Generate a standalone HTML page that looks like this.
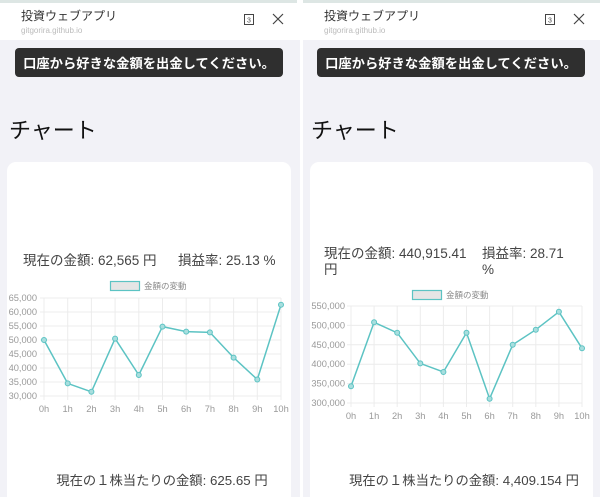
<!DOCTYPE html>
<html><head><meta charset="utf-8"><style>
body{margin:0;width:600px;height:497px;overflow:hidden;background:#fff;font-family:"Liberation Sans","Noto Sans CJK JP",sans-serif}
</style></head><body>
<svg width="600" height="497" xmlns="http://www.w3.org/2000/svg" font-family="'Liberation Sans','Noto Sans CJK JP',sans-serif">
<rect width="600" height="497" fill="#fff"/>
<rect x="0" y="40" width="300" height="457" fill="#f2f2f7"/>
<rect x="303" y="40" width="297" height="457" fill="#f2f2f7"/>
<rect x="0" y="0" width="297" height="3" fill="#dde6e4"/>
<rect x="303" y="0" width="297" height="3" fill="#dde6e4"/>
<text x="21" y="20" font-size="12" fill="#333">投資ウェブアプリ</text>
<text x="21" y="33" font-size="8" fill="#bbb">gitgorira.github.io</text>
<rect x="244.5" y="14.5" width="9" height="10" fill="none" stroke="#444" stroke-width="1"/>
<text x="249" y="22.5" font-size="7" fill="#444" text-anchor="middle">3</text>
<path d="M273 14l10 10M283 14l-10 10" stroke="#444" stroke-width="1.2"/>
<text x="324" y="20" font-size="12" fill="#333">投資ウェブアプリ</text>
<text x="324" y="33" font-size="8" fill="#bbb">gitgorira.github.io</text>
<rect x="545.5" y="14.5" width="9" height="10" fill="none" stroke="#444" stroke-width="1"/>
<text x="550" y="22.5" font-size="7" fill="#444" text-anchor="middle">3</text>
<path d="M574 14l10 10M584 14l-10 10" stroke="#444" stroke-width="1.2"/>
<rect x="15" y="48" width="268" height="29" rx="4" fill="#2f2f2f"/>
<text x="149" y="68" font-size="13.3" fill="#fff" text-anchor="middle" font-weight="bold">口座から好きな金額を出金してください。</text>
<rect x="317" y="48" width="268" height="29" rx="4" fill="#2f2f2f"/>
<text x="451" y="68" font-size="13.3" fill="#fff" text-anchor="middle" font-weight="bold">口座から好きな金額を出金してください。</text>
<text x="9" y="138" font-size="22" fill="#111">チャート</text>
<text x="311" y="138" font-size="22" fill="#111">チャート</text>
<rect x="7" y="162" width="284" height="345" rx="9" fill="#fff"/>
<rect x="310" y="162" width="283" height="345" rx="9" fill="#fff"/>
<text x="23" y="265" font-size="13.5" fill="#444">現在の金額: 62,565 円</text>
<text x="178" y="265" font-size="13.5" fill="#444">損益率: 25.13 %</text>
<rect x="110.5" y="281.5" width="29" height="9" fill="#e5e5e5" stroke="#5cc3c3" stroke-width="1.2"/>
<text x="144" y="289" font-size="8.5" fill="#888">金額の変動</text>
<g stroke="#ececec" stroke-width="1">
<path d="M40 298H281M40 312H281M40 326H281M40 340H281M40 354H281M40 368H281M40 382H281M40 396H281"/>
<path d="M44 298V400M67.7 298V400M91.4 298V400M115.1 298V400M138.8 298V400M162.5 298V400M186.2 298V400M209.9 298V400M233.6 298V400M257.3 298V400M281 298V400"/>
</g>
<g font-size="9.3" fill="#999" text-anchor="end">
<text x="37" y="301">65,000</text><text x="37" y="315">60,000</text><text x="37" y="329">55,000</text><text x="37" y="343">50,000</text><text x="37" y="357">45,000</text><text x="37" y="371">40,000</text><text x="37" y="385">35,000</text><text x="37" y="399">30,000</text>
</g>
<g font-size="9.3" fill="#999" text-anchor="middle">
<text x="44" y="412">0h</text><text x="67.7" y="412">1h</text><text x="91.4" y="412">2h</text><text x="115.1" y="412">3h</text><text x="138.8" y="412">4h</text><text x="162.5" y="412">5h</text><text x="186.2" y="412">6h</text><text x="209.9" y="412">7h</text><text x="233.6" y="412">8h</text><text x="257.3" y="412">9h</text><text x="281" y="412">10h</text>
</g>
<polyline fill="none" stroke="#5cc3c3" stroke-width="1.5" points="44,340 67.7,383.4 91.4,391.8 115.1,338.6 138.8,375 162.5,326.6 186.2,331.6 209.9,332.4 233.6,357.6 257.3,379.5 281,304.7"/>
<g fill="#a8dede" stroke="#5cc3c3" stroke-width="1">
<circle cx="44" cy="340" r="2.5"/><circle cx="67.7" cy="383.4" r="2.5"/><circle cx="91.4" cy="391.8" r="2.5"/><circle cx="115.1" cy="338.6" r="2.5"/><circle cx="138.8" cy="375" r="2.5"/><circle cx="162.5" cy="326.6" r="2.5"/><circle cx="186.2" cy="331.6" r="2.5"/><circle cx="209.9" cy="332.4" r="2.5"/><circle cx="233.6" cy="357.6" r="2.5"/><circle cx="257.3" cy="379.5" r="2.5"/><circle cx="281" cy="304.7" r="2.5"/>
</g>
<text x="162" y="485" font-size="13.3" fill="#444" text-anchor="middle">現在の１株当たりの金額: 625.65 円</text>
<text x="324" y="258" font-size="13.5" fill="#444">現在の金額: 440,915.41</text>
<text x="324" y="274" font-size="13.5" fill="#444">円</text>
<text x="482" y="258" font-size="13.5" fill="#444">損益率: 28.71</text>
<text x="482" y="274" font-size="13.5" fill="#444">%</text>
<rect x="412.5" y="290.5" width="29" height="9" fill="#e5e5e5" stroke="#5cc3c3" stroke-width="1.2"/>
<text x="446" y="298" font-size="8.5" fill="#888">金額の変動</text>
<g stroke="#ececec" stroke-width="1">
<path d="M347 306H582M347 325.4H582M347 344.8H582M347 364.2H582M347 383.6H582M347 403H582"/>
<path d="M351 306V407M374.1 306V407M397.2 306V407M420.3 306V407M443.4 306V407M466.5 306V407M489.6 306V407M512.7 306V407M535.8 306V407M558.9 306V407M582 306V407"/>
</g>
<g font-size="9.3" fill="#999" text-anchor="end">
<text x="345" y="309">550,000</text><text x="345" y="328.4">500,000</text><text x="345" y="347.8">450,000</text><text x="345" y="367.2">400,000</text><text x="345" y="386.6">350,000</text><text x="345" y="406">300,000</text>
</g>
<g font-size="9.3" fill="#999" text-anchor="middle">
<text x="351" y="419">0h</text><text x="374.1" y="419">1h</text><text x="397.2" y="419">2h</text><text x="420.3" y="419">3h</text><text x="443.4" y="419">4h</text><text x="466.5" y="419">5h</text><text x="489.6" y="419">6h</text><text x="512.7" y="419">7h</text><text x="535.8" y="419">8h</text><text x="558.9" y="419">9h</text><text x="582" y="419">10h</text>
</g>
<polyline fill="none" stroke="#5cc3c3" stroke-width="1.5" points="351,386.3 374.1,322.3 397.2,332.8 420.3,363.4 443.4,372 466.5,332.8 489.6,398.7 512.7,344.8 535.8,329.7 558.9,311.8 582,348.3"/>
<g fill="#a8dede" stroke="#5cc3c3" stroke-width="1">
<circle cx="351" cy="386.3" r="2.5"/><circle cx="374.1" cy="322.3" r="2.5"/><circle cx="397.2" cy="332.8" r="2.5"/><circle cx="420.3" cy="363.4" r="2.5"/><circle cx="443.4" cy="372" r="2.5"/><circle cx="466.5" cy="332.8" r="2.5"/><circle cx="489.6" cy="398.7" r="2.5"/><circle cx="512.7" cy="344.8" r="2.5"/><circle cx="535.8" cy="329.7" r="2.5"/><circle cx="558.9" cy="311.8" r="2.5"/><circle cx="582" cy="348.3" r="2.5"/>
</g>
<text x="464" y="485" font-size="13.3" fill="#444" text-anchor="middle">現在の１株当たりの金額: 4,409.154 円</text>
</svg>
</body></html>
